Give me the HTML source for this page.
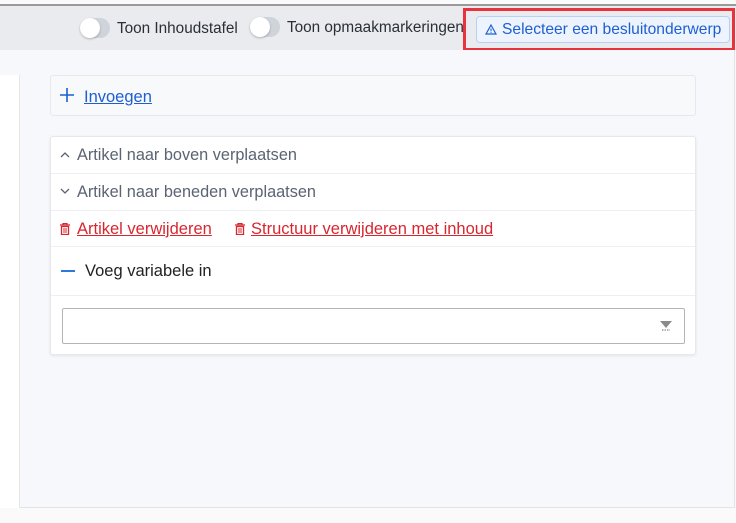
<!DOCTYPE html>
<html><head><meta charset="utf-8"><style>
*{box-sizing:border-box;margin:0;padding:0}
body{width:736px;height:523px;background:#fafafa;font-family:"Liberation Sans",Helvetica,sans-serif;position:relative;overflow:hidden}
.abs{position:absolute}
.topline{left:0;top:4px;width:736px;height:2px;background:#9a9a9a}
.toolbar{left:0;top:6px;width:736px;height:44px;background:#e9ebee}
.main{left:0;top:50px;width:735px;height:458px;background:#f6f8fc;border-right:1px solid #e4e4e4;border-bottom:1px solid #e4e4e4}
.side{left:0;top:75px;width:20px;height:433px;background:#fff;border-right:1px solid #e6e6e6}
.tog{width:30px;height:20px;border-radius:10px;background:#cfd3da}
.tog::after{content:"";position:absolute;left:0;top:0;width:20px;height:20px;border-radius:50%;background:#fff;box-shadow:0 1px 2px rgba(0,0,0,.25)}
.tl{font-size:15.3px;color:#2a2f36;top:20px}
.red{left:463px;top:8px;width:272px;height:43px;border:3px solid #e8323c}
.btn{left:476px;top:16px;width:254px;height:27px;background:#eef4fe;border:1px solid #b9d0f2;border-radius:4px;color:#1d5fd1;font-size:15.6px;line-height:25px;white-space:nowrap}
.card{left:50px;width:646px;background:#fff;border:1px solid #e6e8ec;border-radius:3px}
.row{position:absolute;left:0;width:644px;border-bottom:1px solid #eceef1;font-size:16.3px;color:#5a6472}
a{text-decoration:underline}
</style></head><body>
<div class="abs topline"></div>
<div class="abs toolbar"></div>
<div class="abs tog" style="left:80px;top:18px"></div>
<div class="abs tl" style="left:117px">Toon Inhoudstafel</div>
<div class="abs tog" style="left:250px;top:17px"></div>
<div class="abs tl" style="left:287px;top:19px">Toon opmaakmarkeringen</div>
<div class="abs btn"><svg class="abs" style="left:8px;top:7px" width="12" height="11" viewBox="0 0 12 11"><path d="M6 1L11 10H1Z" stroke="#1d5fd1" stroke-width="1.2" fill="none"/><path d="M6 4.5V7.3M6 8.2V9" stroke="#1d5fd1" stroke-width="1.1"/></svg><span class="abs" style="left:25px;top:0">Selecteer een besluitonderwerp</span></div>
<div class="abs red"></div>
<div class="abs main"></div>
<div class="abs side"></div>
<div class="abs card" style="top:75px;height:41px;background:#f8f9fb">
 <svg class="abs" style="left:9px;top:12px" width="14" height="14" viewBox="0 0 14 14"><path d="M7 0V14M0 7H14" stroke="#1d5fd1" stroke-width="1.6"/></svg>
 <a class="abs" style="left:33px;top:12px;font-size:16.5px;color:#1d5fd1">Invoegen</a>
</div>
<div class="abs card" style="top:136px;height:219px;box-shadow:0 1px 3px rgba(0,0,0,.08)">
 <div class="row" style="top:0;height:37px"><svg class="abs" style="left:9px;top:14px" width="10" height="7" viewBox="0 0 10 7"><path d="M1 6L5 2L9 6" stroke="#5a6472" stroke-width="1.3" fill="none"/></svg><span class="abs" style="left:26px;top:9px">Artikel naar boven verplaatsen</span></div>
 <div class="row" style="top:37px;height:37px"><svg class="abs" style="left:9px;top:14px" width="10" height="7" viewBox="0 0 10 7"><path d="M1 1L5 5L9 1" stroke="#5a6472" stroke-width="1.3" fill="none"/></svg><span class="abs" style="left:26px;top:9px">Artikel naar beneden verplaatsen</span></div>
 <div class="row" style="top:74px;height:36px;color:#d8262f;font-size:16.5px">
  <svg class="abs" style="left:9px;top:12px" width="10" height="12" viewBox="0 0 10 12"><path d="M0 2H10M3 2V0.5H7V2M1.5 3.5H8.5V11.5H1.5Z" stroke="#d8262f" stroke-width="1.3" fill="none"/><path d="M4 5V10M6 5V10" stroke="#d8262f"/></svg>
  <a class="abs" style="left:26px;top:9px">Artikel verwijderen</a>
  <svg class="abs" style="left:184px;top:12px" width="10" height="12" viewBox="0 0 10 12"><path d="M0 2H10M3 2V0.5H7V2M1.5 3.5H8.5V11.5H1.5Z" stroke="#d8262f" stroke-width="1.3" fill="none"/><path d="M4 5V10M6 5V10" stroke="#d8262f"/></svg>
  <a class="abs" style="left:200px;top:9px">Structuur verwijderen met inhoud</a></div>
 <div class="row" style="top:110px;height:49px;color:#222;font-size:16.5px"><span class="abs" style="left:10px;top:23px;width:14px;height:2px;background:#2f76dd"></span><span class="abs" style="left:34px;top:15px">Voeg variabele in</span></div>
 <div class="abs" style="left:11px;top:171px;width:623px;height:36px;border:1px solid #b5b5b5;border-radius:2px;background:#fff">
  <svg class="abs" style="right:12px;top:12px" width="12" height="10" viewBox="0 0 12 10"><path d="M0 0H12L6 7Z" fill="#8a8a8a"/><path d="M2 9H10" stroke="#8a8a8a" stroke-width="1.2" stroke-dasharray="1.5 1"/></svg>
 </div>
</div>
</body></html>
